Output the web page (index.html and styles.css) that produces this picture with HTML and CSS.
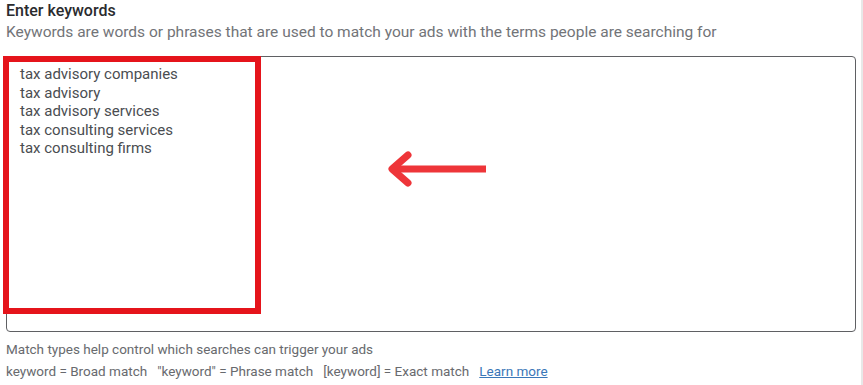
FILE: index.html
```html
<!DOCTYPE html>
<html lang="en">
<head>
    <meta charset="UTF-8" />
    <title>Enter keywords</title>
    <link rel="stylesheet" href="styles.css">
</head>
<body>
    <section class="field">
        <h2 class="field-title">Enter keywords</h2>
        <p class="field-hint">Keywords are words or phrases that are used to match your ads with the terms people are searching for</p>
        <div class="box">
            <div class="keywords">
                <div>tax advisory companies</div>
                <div>tax advisory</div>
                <div>tax advisory services</div>
                <div>tax consulting services</div>
                <div>tax consulting firms</div>
            </div>
            <!-- annotation on top of the screenshot -->
            <div class="highlight"></div>
            <svg class="arrow" width="104" height="40" viewBox="0 0 104 40">
                <path d="M4 20 H99" stroke="#ee3539" stroke-width="7" fill="none" />
                <path d="M21 6 L5 20 L21 34" stroke="#ee3539" stroke-width="7" fill="none" stroke-linecap="round" stroke-linejoin="round" />
            </svg>
        </div>
        <div class="match-info">
            <p>Match types help control which searches can trigger your ads</p>
            <p>keyword = Broad match&nbsp;&nbsp;&nbsp;"keyword" = Phrase match&nbsp;&nbsp;&nbsp;[keyword] = Exact match&nbsp;&nbsp;&nbsp;<a href="#">Learn more</a></p>
        </div>
    </section>
</body>
</html>
```

FILE: styles.css
```css
* {
    margin: 0;
    padding: 0;
    box-sizing: border-box;
}
body {
    font-family: Roboto, "Liberation Sans", sans-serif;
    background-color: #fff;
    width: 863px;
    height: 385px;
    overflow: hidden;
    border-right: 2px solid #e8e8e8;
}
.field {
    padding: 2px 5px 0 6px;
}
.field-title {
    font-size: 16px;
    font-weight: 500;
    color: #2a2b2e;
    line-height: 18px;
}
.field-hint {
    font-size: 15.5px;
    color: #727478;
    line-height: 22px;
    margin-top: 1px;
}
.box {
    position: relative;
    margin-top: 13px;
    height: 276px;
    border: 1px solid #5f6063;
    border-radius: 4px;
}
.keywords {
    padding: 8px 0 0 13px;
    font-size: 15px;
    line-height: 18.5px;
    color: #4a4d51;
}
.highlight {
    position: absolute;
    left: -4px;
    top: -1px;
    width: 258px;
    height: 258px;
    border: 6px solid #e5141b;
}
.arrow {
    position: absolute;
    left: 380px;
    top: 92px;
}
.match-info {
    margin-top: 6px;
    font-size: 13.5px;
    color: #686a6e;
    line-height: 22px;
}
.match-info a {
    color: #3a77b8;
}
```
